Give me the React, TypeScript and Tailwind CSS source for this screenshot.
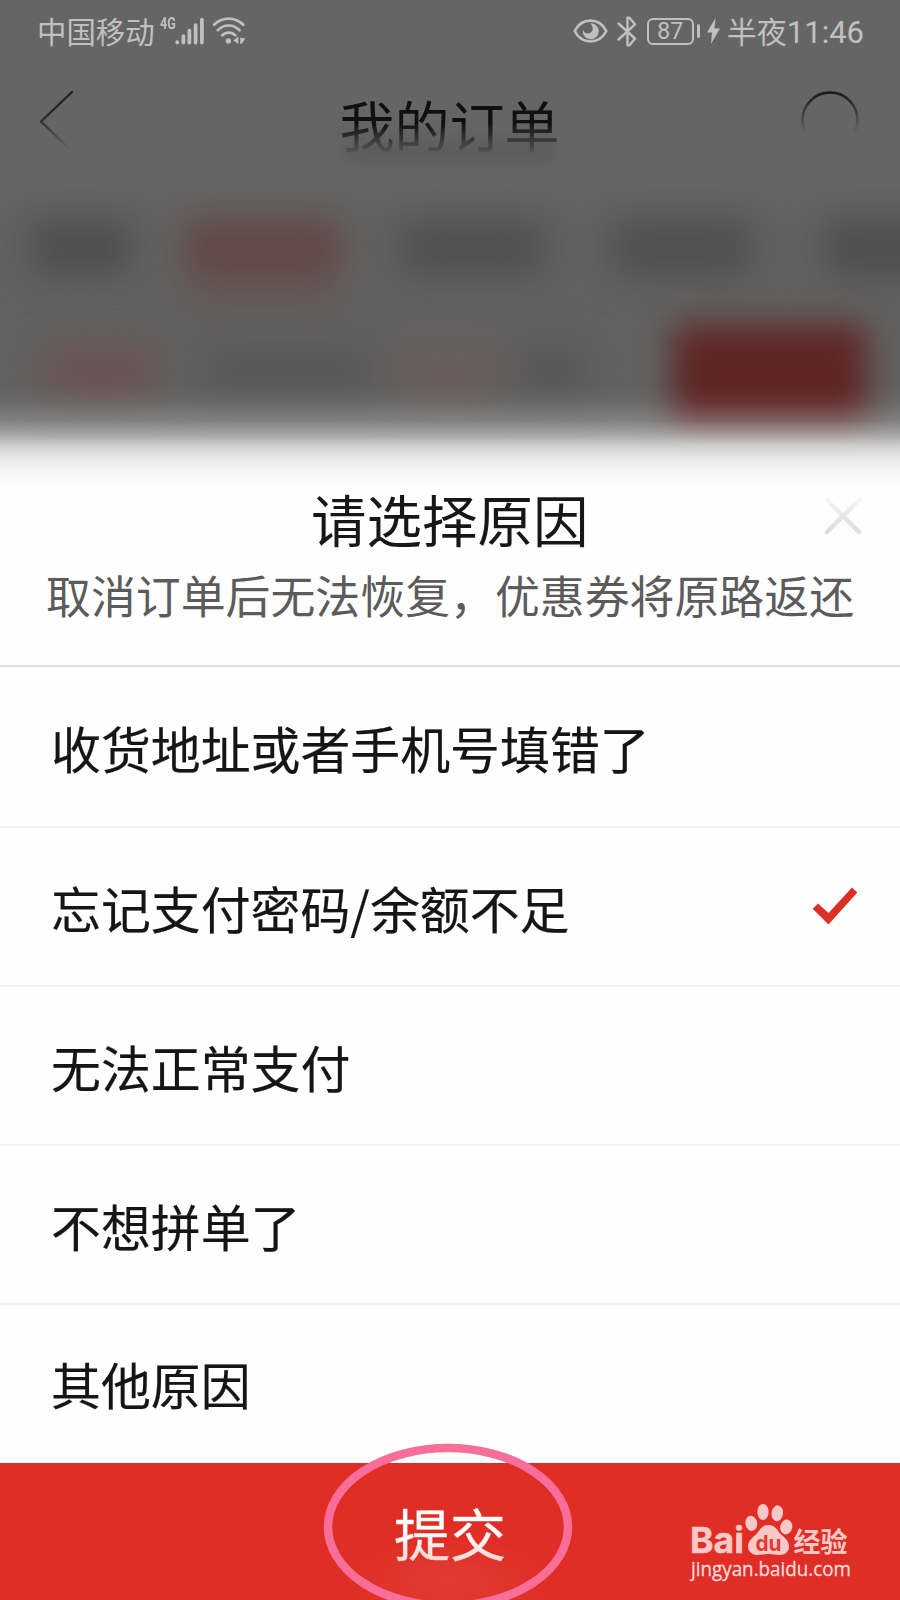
import React from "react";

const reasons = [
  { label: "收货地址或者手机号填错了" },
  { label: "忘记支付密码/余额不足", selected: true },
  { label: "无法正常支付" },
  { label: "不想拼单了" },
  { label: "其他原因" },
];

function SignalIcon() {
  return (
    <svg className="block h-[30px] w-[30px]" viewBox="0 0 30 30" stroke="currentColor" strokeWidth="3.7" strokeLinecap="round">
      <path d="M2.2 26.2v.4M8.4 20v6.6M14.4 14.5v12.1M20.6 9v17.6M26.9 3.5v23.1" />
    </svg>
  );
}

function WifiIcon() {
  return (
    <svg className="block h-[30px] w-[34px]" viewBox="0 0 34 30" fill="none" stroke="currentColor" strokeWidth="2.7" strokeLinecap="round">
      <path d="M2 8.800C10.500.6 23 .6 31.300 8.800M5.800 14.200c6.200-6.300 15.500-6.300 21.700 0M10.200 19.400c3.800-3.800 9.300-3.800 13.100 0" />
      <circle cx="16.4" cy="25" r="2.7" fill="currentColor" stroke="none" />
      <path d="M21.300 24.600l5-4v7.400zM28.200 21.400l5.200 1.200-3.600 5.200h-1.600z" fill="currentColor" stroke="none" />
    </svg>
  );
}

function EyeIcon() {
  return (
    <svg className="block h-[24px] w-[35px]" viewBox="0 0 35 24" fill="none">
      <path d="M1.700 12C5 5.400 11 1.700 17.500 1.700S30 5.400 33.300 12C30 18.600 24 22.300 17.500 22.300S5 18.600 1.700 12z" stroke="currentColor" strokeWidth="2.700" strokeLinejoin="round" />
      <path d="M17.500 4.200a8 8 0 1 1-7.600 6.200c.8 2.800 3 4.300 5 4.100 3.200-.3 5.600-3.100 4.600-6.300-.4-1.600-1.100-2.900-2-4z" fill="currentColor" />
    </svg>
  );
}

function BluetoothIcon() {
  return (
    <svg className="block h-[31px] w-[20px]" viewBox="0 0 20 31" fill="none" stroke="currentColor" strokeWidth="2.400" strokeLinejoin="round" strokeLinecap="round">
      <path d="M1.500 7.500L18 22.500 12.500 29.200H10.500V18.500M1.500 23.500L18 8.300 12.500 1.700H10.500V12.500" />
    </svg>
  );
}

function StatusBar() {
  return (
    <div className="flex h-[62px] shrink-0 items-center justify-between pl-[37px] pr-[36px] text-[#c0c0c0]">
      <div className="flex items-center">
        <span className="text-[29.400px] leading-none">中国移动</span>
        <span className="ml-[5px] -mt-px w-[15px] origin-left scale-x-[.74] self-start font-['Roboto'] text-[17px] font-bold leading-none">4G</span>
        <SignalIcon />
        <div className="ml-[7px]">
          <WifiIcon />
        </div>
      </div>
      <div className="flex items-center">
        <EyeIcon />
        <div className="ml-[9px]">
          <BluetoothIcon />
        </div>
        <div className="ml-[10px] flex h-[27px] w-[47px] items-center justify-center rounded-[6px] border-2 border-[#c0c0c0] font-['Roboto'] text-[23px] leading-none">
          87
        </div>
        <div className="ml-[3px] h-[14px] w-[3px] rounded-sm bg-[#c0c0c0]" />
        <svg className="ml-[7px] block h-[26px] w-[13px]" viewBox="0 0 13 26" fill="currentColor">
          <path d="M8.500 0L0 14.500h5L4 26l9-15.500H7.500z" />
        </svg>
        <span className="ml-[7px] whitespace-nowrap pt-[2px] font-['Roboto','Noto_Sans_CJK_SC',sans-serif] text-[30px] leading-none">
          半夜<span className="text-[31px]">11:46</span>
        </span>
      </div>
    </div>
  );
}

function Header() {
  return (
    <div className="flex h-[108px] shrink-0 items-start pl-[39px] pr-[40px] pt-[28px]">
      <svg className="block h-[64px] w-[36px]" viewBox="0 0 36 64" fill="none">
        <defs>
          <linearGradient id="back" x1="0" y1="0" x2="0" y2="1">
            <stop offset="0" stopColor="#202020" />
            <stop offset=".45" stopColor="#2c2c2c" />
            <stop offset="1" stopColor="#666" />
          </linearGradient>
        </defs>
        <path d="M33 2L2 31.500 33 61.500" stroke="url(#back)" strokeWidth="2.400" strokeLinecap="round" strokeLinejoin="round" />
      </svg>
      <div className="flex flex-1 flex-col items-center pl-[24px]">
        <h1 className="h-[68px] bg-linear-to-b from-[#101010] from-48% to-[#616161] to-96% bg-clip-text text-[55px] leading-[67px] text-transparent">
          我的订单
        </h1>
        <div className="-mt-[14px] h-[14px] w-[210px] bg-[#3c3c3c]/35 blur-[10px]" />
      </div>
      <svg className="block h-[60px] w-[60px]" viewBox="0 0 60 60" fill="none">
        <defs>
          <linearGradient id="ring" x1="0" y1="0" x2="0" y2="1">
            <stop offset="0" stopColor="#191919" />
            <stop offset=".45" stopColor="#484848" />
            <stop offset=".75" stopColor="#656565" />
          </linearGradient>
        </defs>
        <circle cx="30" cy="30" r="27.500" stroke="url(#ring)" strokeWidth="2.500" />
      </svg>
    </div>
  );
}

function Haze() {
  return (
    <div className="flex h-[320px] shrink-0 flex-col overflow-hidden bg-linear-to-b from-[#656565] to-[#626262] to-20%">
      <div className="flex h-[130px] shrink-0 pl-[32px] pt-[50px] blur-[18px]">
        <div className="h-[54px] w-[98px] shrink-0 bg-[#4d4d4d]" />
        <div className="ml-[55px] w-[155px] shrink-0">
          <div className="h-[54px] bg-[#634644]" />
          <div className="h-[34px] bg-[#645856]" />
        </div>
        <div className="ml-[59px] h-[56px] w-[146px] shrink-0 bg-[#505050]" />
        <div className="ml-[67px] h-[56px] w-[140px] shrink-0 bg-[#4f4f4f]" />
        <div className="ml-[73px] h-[56px] w-[140px] shrink-0 bg-[#4d4d4d]" />
      </div>
      <div className="flex h-[140px] shrink-0 items-start pl-[45px] pt-[24px]">
        <div className="mt-[22px] flex blur-[18px]">
          <div className="h-[50px] w-[112px] bg-[#6a5351]" />
          <div className="ml-[45px] h-[50px] w-[173px] bg-[#585858]" />
          <div className="ml-[20px] h-[50px] w-[106px] bg-[#6a5d5c]" />
          <div className="ml-[14px] h-[50px] w-[72px] bg-[#575757]" />
        </div>
        <div className="ml-[86px] h-[102px] w-[194px] shrink-0 rounded-lg bg-[#5e2523] blur-[17px]" />
      </div>
    </div>
  );
}

function Watermark() {
  return (
    <svg className="absolute right-[44px] bottom-[14px] h-[86px] w-[170px] text-[#f9c9c8]" viewBox="0 0 170 86" fill="currentColor">
      <text x="4" y="53" fontSize="36" fontWeight="700" fontFamily="Inter" textLength="54" lengthAdjust="spacingAndGlyphs" stroke="currentColor" strokeWidth=".5">Bai</text>
      <ellipse cx="65.300" cy="23.300" rx="5.900" ry="7.600" transform="rotate(-8 65.300 23.300)" />
      <ellipse cx="77" cy="12" rx="5.600" ry="8" />
      <ellipse cx="91.300" cy="13.300" rx="5.800" ry="8" transform="rotate(8 91.300 13.300)" />
      <ellipse cx="100.200" cy="27" rx="6" ry="7.500" transform="rotate(12 100.200 27)" />
      <path d="M82.500 25c4.500 0 7.500 2.500 10 6.500 3 4.500 10.500 7.500 10.500 15 0 5.500-4 8.500-9.500 8.500-4 0-6.500-1-11-1s-7 1-11 1c-5 0-9.500-3-9.500-8.500 0-7.500 7.500-10.500 10.500-15 2.500-4 5.500-6.500 10-6.500z" />
      <text x="69.500" y="50.500" fontSize="21" fontWeight="700" fontFamily="Inter" fill="#e23a33" textLength="26" lengthAdjust="spacingAndGlyphs">du</text>
      <text x="107.500" y="51.500" fontSize="27" fontWeight="700" fontFamily="Noto Sans CJK SC" textLength="54" lengthAdjust="spacingAndGlyphs">经验</text>
      <text x="5" y="75.500" fontSize="19.500" fontFamily="Open Sans" fill="#fadbd9" textLength="160" lengthAdjust="spacingAndGlyphs" stroke="#fadbd9" strokeWidth=".3">jingyan.baidu.com</text>
    </svg>
  );
}

function CloseIcon() {
  return (
    <svg className="mt-[7px] block h-[40px] w-[40px]" viewBox="0 0 40 40" fill="none">
      <defs>
        <linearGradient id="close" x1="0" y1="0" x2="0" y2="1">
          <stop offset="0" stopColor="#f6f6f6" />
          <stop offset=".5" stopColor="#e6e6e6" />
          <stop offset="1" stopColor="#dedede" />
        </linearGradient>
      </defs>
      <path d="M4 3L36 35M36 3L4 35" stroke="url(#close)" strokeWidth="4.500" strokeLinecap="round" />
    </svg>
  );
}

function ReasonRow({ label, selected }: { label: string; selected?: boolean }) {
  return (
    <li className="flex h-[159px] shrink-0 items-center justify-between border-b-2 border-[#f3f3f3] pl-[51px] pr-[42px] first:h-[161px] last:h-[158px] last:border-transparent">
      <span className="text-[49.900px] leading-[60px] text-[#151515] [-webkit-text-stroke:0.2px_#151515]">{label}</span>
      {selected && (
        <svg className="-mt-[2px] block h-[38px] w-[46px]" viewBox="0 0 46 38" fill="#dc2f28">
          <path d="M.7 21.800L6 16.500 16.500 26 40 .4 45.300 5.400 16.500 37.500z" />
        </svg>
      )}
    </li>
  );
}

export default function App() {
  return (
    <div className="relative flex h-[1600px] w-[900px] flex-col overflow-hidden bg-[#656565] font-['Noto_Sans_CJK_SC',sans-serif]">
      <StatusBar />
      <Header />
      <Haze />
      <div className="relative -mt-[110px] h-[110px] shrink-0 bg-[linear-gradient(to_bottom,transparent_5%,rgba(254,254,254,.05)_20%,rgba(254,254,254,.2)_37%,rgba(254,254,254,.44)_50%,rgba(254,254,254,.7)_60%,rgba(254,254,254,.87)_72%,rgba(254,254,254,.96)_86%,#fefefe)]" />
      <section className="flex flex-1 flex-col bg-[#fefefe]">
        <div className="h-[177px] shrink-0 border-b-2 border-[#e0e0e0]">
          <div className="flex h-[56px] justify-between pl-[311px] pr-[37px]">
            <h2 className="text-[55.500px] leading-[56px] text-[#171717]">请选择原因</h2>
            <CloseIcon />
          </div>
          <p className="mt-[19px] whitespace-nowrap pl-[46px] text-[44.900px] leading-[60px] text-[#5b5b5b]">
            取消订单后无法恢复，优惠券将原路返还
          </p>
        </div>
        <ul className="flex flex-col">
          {reasons.map((reason) => (
            <ReasonRow key={reason.label} label={reason.label} selected={reason.selected} />
          ))}
        </ul>
        <button className="flex flex-1 items-center justify-center bg-[radial-gradient(ellipse_110px_45px_at_450px_118px,#e03d33,#e02d25)]">
          <span className="bg-linear-to-b from-white from-50% to-[#fad0ca] bg-clip-text text-[56px] leading-[68px] text-transparent [-webkit-text-stroke:0.5px_transparent]">
            提交
          </span>
        </button>
      </section>
      <svg className="absolute left-[320px] top-[1440px] h-[160px] w-[256px]" viewBox="0 0 256 160" fill="none">
        <ellipse cx="128" cy="87" rx="120" ry="79" stroke="#f76e98" strokeWidth="8.500" />
      </svg>
      <Watermark />
    </div>
  );
}
